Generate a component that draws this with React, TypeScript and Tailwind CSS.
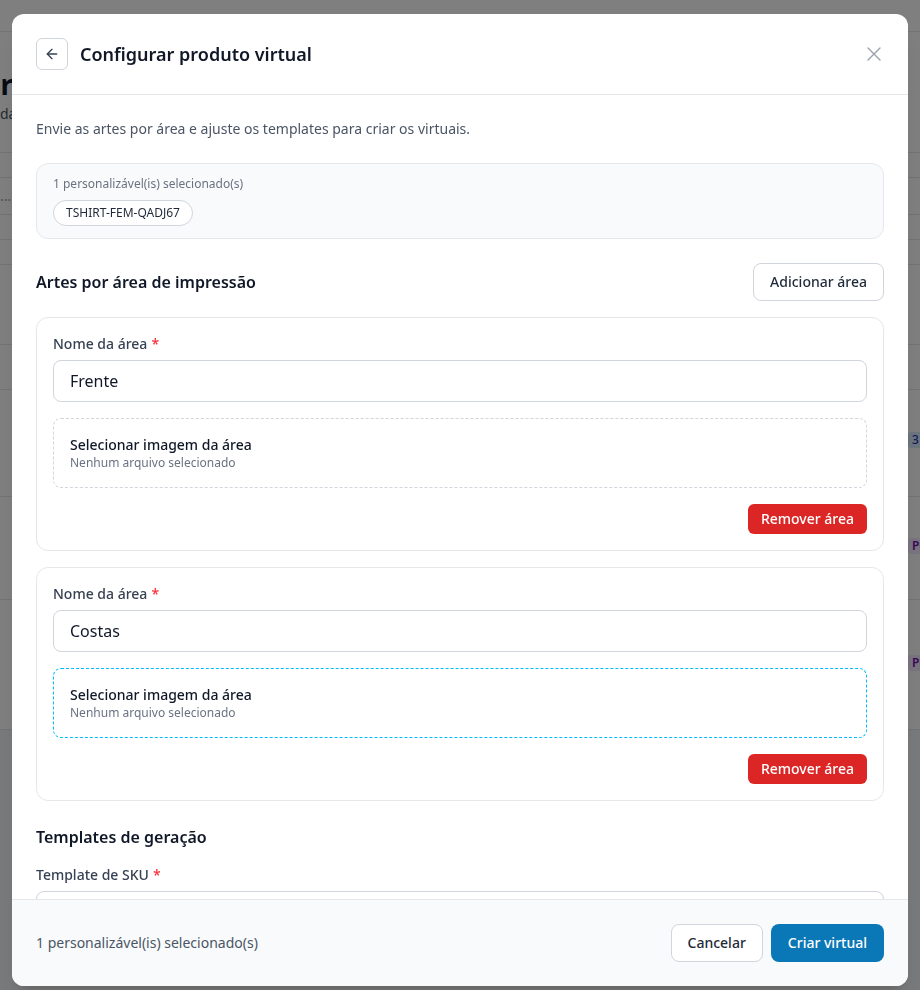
import { ArrowLeft } from 'lucide-react';

type Area = {
  name: string;
  active?: boolean;
};

const areas: Area[] = [{ name: 'Frente' }, { name: 'Costas', active: true }];

// linhas da página de fundo (atrás do modal)
const bgRows = [
  { h: 'h-[25px]' },
  { h: 'h-[37px]', placeholder: true },
  { h: 'h-[25px]' },
  { h: 'h-[25px]' },
  { h: 'h-[80px]' },
  { h: 'h-[45px]' },
  { h: 'h-[107px]', badge: 'blue' },
  { h: 'h-[103px]', badge: 'purple' },
  { h: 'h-[130px]', badge: 'purple' },
];

const BackgroundPage = () => (
  <div className="min-h-[990px] overflow-hidden bg-gray-100">
    <div className="bg-white">
      <div className="h-8 border-b border-gray-200" />
      <div className="h-[120px] pt-[34px]">
        <h1 className="-ml-[17px] text-[28px] font-bold leading-9 text-gray-900">Produtos</h1>
        <p className="mt-[2px] text-sm text-gray-600">da loja</p>
      </div>
      <div className="border-t border-gray-200">
        {bgRows.map((row, i) => (
          <div key={i} className={`${row.h} flex items-center border-b border-gray-200`}>
            {row.placeholder && <span className="text-sm text-gray-400">...</span>}
            {row.badge === 'blue' && (
              <span className="ml-[908px] mt-[-6px] rounded bg-blue-100 px-1 text-xs font-medium text-blue-800">
                3
              </span>
            )}
            {row.badge === 'purple' && (
              <span className="ml-[908px] mt-[-4px] rounded bg-purple-100 px-1 text-xs font-semibold text-purple-800">
                Pe
              </span>
            )}
          </div>
        ))}
      </div>
    </div>
  </div>
);

const Required = () => <span className="ml-1 text-red-500">*</span>;

const AreaCard = ({ area }: { area: Area }) => (
  <div className="rounded-xl border border-gray-200 bg-white p-4">
    <label className="block text-sm font-medium leading-5 text-gray-700">
      Nome da área
      <Required />
    </label>
    <input
      className="mt-1.5 block h-[42px] w-full rounded-lg border border-gray-300 px-4 text-base text-gray-900 outline-none"
      defaultValue={area.name}
    />
    <div
      className={`mt-4 rounded-lg border border-dashed px-4 py-4 ${
        area.active ? 'border-sky-400' : 'border-gray-300'
      }`}
    >
      <p className="text-sm font-medium leading-5 text-gray-900">Selecionar imagem da área</p>
      <p className="text-xs leading-4 text-gray-500">Nenhum arquivo selecionado</p>
    </div>
    <div className="mt-4 flex justify-end">
      <button
        type="button"
        className="h-[30px] rounded-md bg-[#dc2626] px-[13px] text-sm font-medium text-white"
      >
        Remover área
      </button>
    </div>
  </div>
);

export default function App() {
  return (
    <div className="relative font-['Noto_Sans','Liberation_Sans',sans-serif]">
      <BackgroundPage />

      {/* overlay + modal */}
      <div className="fixed inset-0 bg-black/50" />
      <div className="fixed inset-x-3 top-[14px] flex h-[972px] flex-col overflow-hidden rounded-xl bg-white shadow-xl">
        {/* header */}
        <div className="flex items-center justify-between border-b border-gray-200 px-6 py-6">
          <div className="flex items-center gap-3">
            <button
              type="button"
              className="flex h-8 w-8 items-center justify-center rounded-md border border-gray-300 text-gray-700"
            >
              <ArrowLeft size={16} strokeWidth={2} />
            </button>
            <h2 className="text-lg font-semibold text-gray-900">Configurar produto virtual</h2>
          </div>
          <button type="button" className="mr-[2px] text-gray-400">
            <svg width="16" height="16" viewBox="0 0 16 16" fill="none" stroke="currentColor" strokeWidth="1.4" strokeLinecap="round">
              <path d="M2 2l12 12M14 2L2 14" />
            </svg>
          </button>
        </div>

        {/* body */}
        <div className="flex-1 overflow-hidden px-6 pt-6">
          <p className="text-sm leading-5 text-gray-600">
            Envie as artes por área e ajuste os templates para criar os virtuais.
          </p>

          <div className="mt-6 rounded-xl border border-gray-200 bg-gray-50 px-4 py-3">
            <p className="text-xs leading-4 text-gray-500">1 personalizável(is) selecionado(s)</p>
            <div className="mt-2 flex">
              <span className="rounded-full border border-gray-300 bg-white px-3 py-1 text-xs leading-4 text-gray-800">
                TSHIRT-FEM-QADJ67
              </span>
            </div>
          </div>

          <div className="mt-6 flex items-center justify-between">
            <h3 className="text-base font-semibold text-gray-900">Artes por área de impressão</h3>
            <button
              type="button"
              className="h-[38px] rounded-lg border border-gray-300 bg-white px-4 text-sm font-medium text-gray-800"
            >
              Adicionar área
            </button>
          </div>

          <div className="mt-4 space-y-4">
            {areas.map((area) => (
              <AreaCard key={area.name} area={area} />
            ))}
          </div>

          <h3 className="mt-6 text-base font-semibold leading-6 text-gray-900">Templates de geração</h3>
          <label className="mt-4 block text-sm font-medium leading-5 text-gray-700">
            Template de SKU
            <Required />
          </label>
          <input
            className="mt-1.5 block h-[42px] w-full rounded-lg border border-gray-300 px-4 text-base text-gray-900 outline-none"
            defaultValue=""
          />
        </div>

        {/* footer */}
        <div className="flex items-center justify-between border-t border-gray-200 bg-gray-50 px-6 py-6">
          <p className="text-sm text-gray-600">1 personalizável(is) selecionado(s)</p>
          <div className="flex gap-2">
            <button
              type="button"
              className="h-[38px] rounded-lg border border-gray-300 bg-white px-4 text-sm font-medium text-gray-800"
            >
              Cancelar
            </button>
            <button
              type="button"
              className="h-[38px] rounded-lg border border-transparent bg-[#0a77b6] px-4 text-sm font-medium text-white"
            >
              Criar virtual
            </button>
          </div>
        </div>
      </div>
    </div>
  );
}
